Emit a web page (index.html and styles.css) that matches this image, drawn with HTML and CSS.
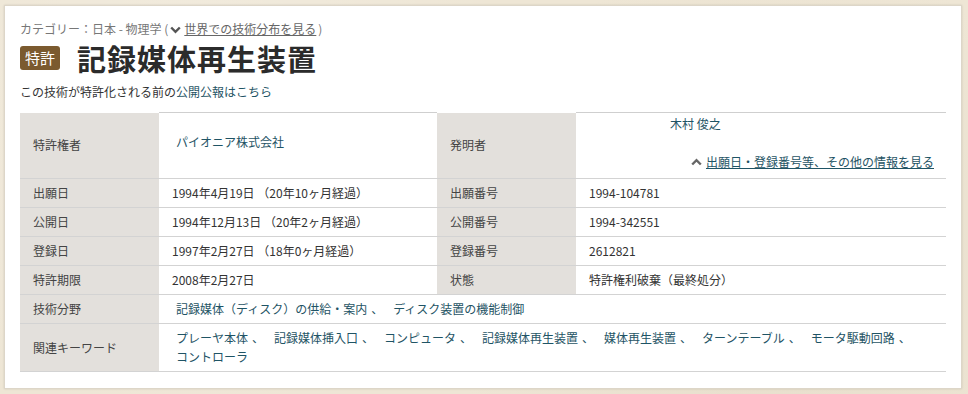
FILE: index.html
```html
<!DOCTYPE html>
<html lang="ja">
<head>
<meta charset="utf-8">
<title>記録媒体再生装置</title>
<link rel="stylesheet" href="styles.css">
</head>
<body>
<div class="panel">
  <div class="category"><span>カテゴリー：日本 - 物理学 (</span><svg class="chev" width="11" height="8" viewBox="0 0 11 8"><path d="M1.2 1.5 L5.5 5.8 L9.8 1.5" fill="none" stroke="#555" stroke-width="2.4"/></svg><a class="cat-link" href="#">世界での技術分布を見る</a><span class="close">)</span></div>
  <h1 class="title"><span class="badge">特許</span><span class="title-text">記録媒体再生装置</span></h1>
  <p class="pre">この技術が特許化される前の<a class="link" href="#">公開公報はこちら</a></p>
  <table class="info">
    <colgroup><col class="c1"><col class="c2"><col class="c3"><col class="c4"></colgroup>
    <tr class="tall">
      <th>特許権者</th>
      <td class="owner"><a class="link" href="#">パイオニア株式会社</a></td>
      <th>発明者</th>
      <td class="inventor">
        <div class="inv-name"><a class="link" href="#">木村 俊之</a></div>
        <div class="more"><svg class="chev-up" width="11" height="8" viewBox="0 0 11 8"><path d="M1.2 6.5 L5.5 2.2 L9.8 6.5" fill="none" stroke="#666" stroke-width="2.4"/></svg><a class="link ul" href="#">出願日・登録番号等、その他の情報を見る</a></div>
      </td>
    </tr>
    <tr><th>出願日</th><td>1994年4月19日 （20年10ヶ月経過）</td><th>出願番号</th><td>1994-104781</td></tr>
    <tr><th>公開日</th><td>1994年12月13日 （20年2ヶ月経過）</td><th>公開番号</th><td>1994-342551</td></tr>
    <tr><th>登録日</th><td>1997年2月27日 （18年0ヶ月経過）</td><th>登録番号</th><td>2612821</td></tr>
    <tr><th>特許期限</th><td>2008年2月27日</td><th>状態</th><td>特許権利破棄（最終処分）</td></tr>
    <tr><th>技術分野</th><td colspan="3" class="links"><div class="items"><span class="item"><a class="link" href="#">記録媒体（ディスク）の供給・案内</a><span class="sep">、</span></span><span class="item"><a class="link" href="#">ディスク装置の機能制御</a></span></div></td></tr>
    <tr><th>関連キーワード</th><td colspan="3" class="links kw"><div class="items"><span class="item"><a class="link" href="#">プレーヤ本体</a><span class="sep">、</span></span><span class="item"><a class="link" href="#">記録媒体挿入口</a><span class="sep">、</span></span><span class="item"><a class="link" href="#">コンピュータ</a><span class="sep">、</span></span><span class="item"><a class="link" href="#">記録媒体再生装置</a><span class="sep">、</span></span><span class="item"><a class="link" href="#">媒体再生装置</a><span class="sep">、</span></span><span class="item"><a class="link" href="#">ターンテーブル</a><span class="sep">、</span></span><span class="item"><a class="link" href="#">モータ駆動回路</a><span class="sep">、</span></span><span class="item"><a class="link" href="#">コントローラ</a></span></div></td></tr>
  </table>
</div>
</body>
</html>
```
FILE: styles.css
```css
html, body {
  margin: 0;
  padding: 0;
}
body {
  background-color: #eee6d5;
  background-image:
    radial-gradient(circle at 20% 30%, rgba(255,255,255,0.25) 0, rgba(255,255,255,0) 40%),
    radial-gradient(circle at 80% 70%, rgba(200,185,160,0.2) 0, rgba(200,185,160,0) 40%);
  font-family: "Noto Sans CJK JP", "Noto Sans", sans-serif;
  font-size: 12px;
  color: #333;
  height: 394px;
  overflow: hidden;
  text-spacing-trim: space-all;
}
.panel {
  margin: 5px 6px 0 4px;
  height: 384px;
  box-sizing: border-box;
  background: #fff;
  border: 1px solid #ddd6c8;
  box-shadow: 0 0 2px rgba(0,0,0,0.12);
  padding: 14px 16px 0 15px;
}
.category {
  color: #777;
  line-height: 18px;
  height: 18px;
  display: flex;
  align-items: center;
  white-space: pre;
}
.chev {
  margin: 1px 3px 0 2px;
}
.cat-link {
  color: #666;
  text-decoration: underline;
}
.close {
  margin-left: 2px;
}
.title {
  margin: 2px 0 0;
  height: 36px;
  display: flex;
  align-items: center;
  font-weight: normal;
}
.badge {
  background: #7b5a2f;
  color: #fff;
  font-size: 15px;
  line-height: 24px;
  height: 24px;
  padding: 0 5px;
  border-radius: 3px;
  margin-right: 17px;
}
.title-text {
  font-size: 29px;
  font-weight: bold;
  color: #2b2b2b;
  line-height: 36px;
  letter-spacing: 1px;
}
.pre {
  margin: 7px 0 0;
  line-height: 18px;
}
.link {
  color: #1f5465;
  text-decoration: none;
  white-space: nowrap;
}
.ul {
  text-decoration: underline;
}
.info {
  margin-top: 11px;
  border-collapse: collapse;
  width: 926px;
  table-layout: fixed;
  border-top: 1px solid #cfcfcf;
}
.c1 { width: 139px; }
.c2 { width: 278px; }
.c3 { width: 139px; }
.c4 { width: 370px; }
.info th, .info td {
  border-bottom: 1px solid #d3d3d3;
  text-align: left;
  font-weight: normal;
  padding: 5px 13px;
  line-height: 18px;
  vertical-align: middle;
}
.info th {
  background: #e3e0dc;
  color: #444;
  border-top: 1px solid #fff;
}
.info td {
  color: #333;
}
.tall th {
  height: 56px;
  padding-top: 4px;
}
.info .owner {
  padding-left: 17px;
  padding-bottom: 13px;
}
.info .inventor {
  padding: 2px 12px 6px;
  vertical-align: top;
}
.inv-name {
  padding-left: 82px;
  line-height: 18px;
}
.more {
  margin-top: 20px;
  display: flex;
  justify-content: flex-end;
  align-items: center;
  line-height: 18px;
}
.chev-up {
  margin-right: 4px;
}
.info .links {
  padding-left: 17px;
  padding-right: 13px;
}
.items {
  display: flex;
  flex-wrap: wrap;
}
.item {
  display: flex;
  white-space: nowrap;
}
.sep {
  color: #1f5465;
  display: inline-block;
  width: 22px;
  margin-left: 4px;
}
.info .kw {
  line-height: 19px;
  padding-top: 4px;
  padding-bottom: 5px;
  height: 38px;
  vertical-align: top;
}
```
